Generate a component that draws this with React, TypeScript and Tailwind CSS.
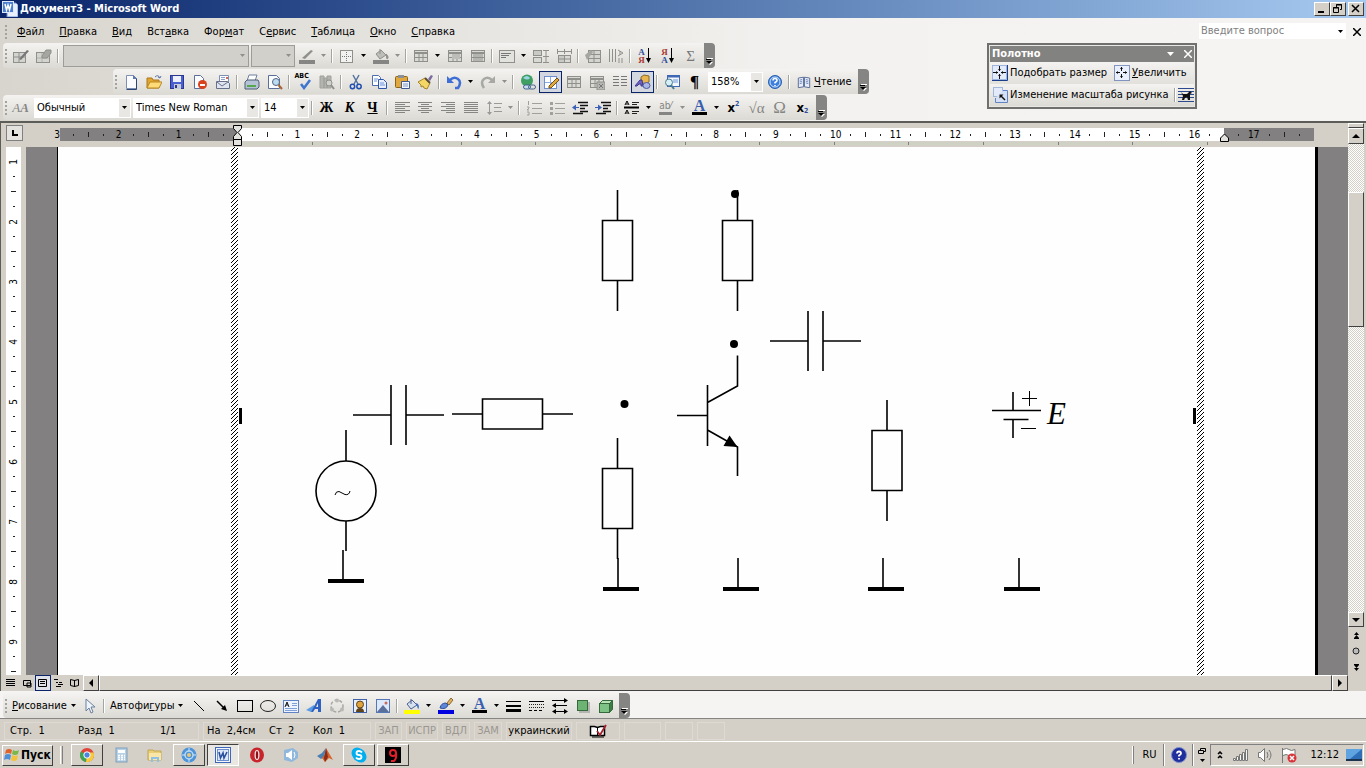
import React from 'react';

const GRAY = '#8f8f8c';
const NAVY = '#1c3f8c';

/* ---------- icons (16x16) ---------- */

const tableGrid = (
  <>
    <rect x="1.5" y="2.5" width="13" height="11" fill="#d9d9d6" stroke={GRAY} />
    <path d="M1 5h14" stroke={GRAY} strokeWidth="2" />
    <path d="M2 9.5h12M6 5v8M10 5v8" stroke={GRAY} />
  </>
);

const bars = (rows: number[], color: string) =>
  rows.map((w, i) => <rect key={i} x="1" y={2 + i * 2} width={w} height="1" fill={color} />);

const icons: Record<string, React.ReactNode> = {
  drawTable: (
    <>
      <rect x="0.5" y="4.5" width="12" height="10" fill="#d3d3cf" stroke={GRAY} />
      <path d="M1 9h11M6 5v9" stroke={GRAY} />
      <path d="M6 11l8-9 2 1-8 9z" fill="#777" />
    </>
  ),
  eraser: (
    <>
      <rect x="0.5" y="4.5" width="13" height="10" fill="#d3d3cf" stroke={GRAY} />
      <path d="M1 10h12M6 5v9" stroke="#b0b0ad" />
      <path d="M6 8l4-6h5v3l-4 5H6z" fill="#a5a5a2" stroke={GRAY} />
    </>
  ),
  penGray: (
    <>
      <path d="M3 10l9-8 2 1-8 8z" fill={GRAY} />
      <rect x="0" y="12" width="16" height="4" fill="#858583" />
    </>
  ),
  borders: (
    <>
      <rect x="1.5" y="2.5" width="12" height="12" fill="#f2f2f0" stroke={GRAY} />
      <path d="M7.5 4v9M3 8.5h9" stroke="#777" strokeDasharray="1 1" />
    </>
  ),
  bucketGray: (
    <>
      <path d="M3 6l5-4 5 5-6 4z" fill="#bdbdba" stroke={GRAY} />
      <path d="M7 6V1M13 6c3 2 2 5 1 5z" stroke={GRAY} fill={GRAY} />
      <rect x="0" y="12" width="16" height="4" fill="#858583" />
    </>
  ),
  table: tableGrid,
  merge: (
    <>
      {tableGrid}
      <rect x="5" y="6" width="8" height="5" fill="#bcbcb9" />
    </>
  ),
  split: (
    <>
      {tableGrid}
      <path d="M4 5v8M8 5v8M12 5v8" stroke={GRAY} />
    </>
  ),
  alignBox: (
    <>
      <rect x="0.5" y="2.5" width="15" height="12" fill="#e2e2df" stroke={GRAY} />
      <path d="M2 5.5h10M2 7.5h8M2 9.5h5" stroke="#777" />
    </>
  ),
  rowsEven: (
    <>
      <rect x="0.5" y="2.5" width="8" height="5" fill="#c9c9c6" stroke={GRAY} />
      <rect x="0.5" y="9.5" width="8" height="5" fill="#d9d9d6" stroke={GRAY} />
      <path d="M10 2.5h6M10 8.5h6M10 14.5h6M13 3v11" stroke={GRAY} />
    </>
  ),
  colsEven: (
    <>
      <path d="M1 3.5h15M1.5 1v5M8.5 1v5M15.5 1v5" stroke={GRAY} />
      <rect x="2.5" y="7.5" width="6" height="7" fill="#c9c9c6" stroke={GRAY} />
      <rect x="8.5" y="7.5" width="6" height="7" fill="#d9d9d6" stroke={GRAY} />
      <path d="M3 11h11" stroke={GRAY} />
    </>
  ),
  autoFormat: (
    <>
      <rect x="3.5" y="2.5" width="12" height="12" fill="#d3d3cf" stroke={GRAY} />
      <path d="M4 6.5h11M4 10.5h11M9 3v11" stroke={GRAY} />
      <path d="M0 7l6-5 2 2-6 8z" fill="#a5a5a2" />
    </>
  ),
  textDir: (
    <>
      <path d="M1.5 1v13M4.5 1v13M7.5 1v13M11 10v5M14 10v5" stroke={GRAY} />
      <path d="M10 2l5 3-5 3M12 3v4" stroke={GRAY} fill="none" />
    </>
  ),
  newDoc: (
    <>
      <path d="M3.5 1.5h7l3 3v10h-10z" fill="#fafcff" stroke="#7d8fb3" />
      <path d="M13.5 4.5v11h-10" fill="none" stroke="#2f4577" />
      <path d="M10 1v4h4z" fill="#5f79ac" />
    </>
  ),
  open: (
    <>
      <path d="M1 4h5l1 2h6v8H1z" fill="#e3a52e" stroke="#a9761c" />
      <path d="M1 14l3-6h12l-3 6z" fill="#ffdb77" stroke="#b98722" />
      <path d="M9 3q3-3 5 1l1-2M14 4l-2-1" fill="none" stroke="#5a74a8" />
    </>
  ),
  save: (
    <>
      <rect x="1.5" y="1.5" width="13" height="13" fill="#4a5fd0" stroke="#2a378f" />
      <rect x="4" y="2" width="8" height="6" fill="#eef1fb" />
      <rect x="5" y="10" width="7" height="5" fill="#c8cdd8" />
      <rect x="6" y="11" width="2" height="3" fill="#2a378f" />
    </>
  ),
  permission: (
    <>
      <path d="M2.5 1.5h6l3 3v10h-9z" fill="#fafcff" stroke="#5b6f9b" />
      <circle cx="10.5" cy="10.5" r="4.5" fill="#d9421f" />
      <rect x="8" y="10" width="5" height="2" fill="#fff" />
    </>
  ),
  mail: (
    <>
      <path d="M4.5 1.5h9v7h-9z" fill="#fff" stroke="#7d8fb3" />
      <path d="M6 3.5h4M6 5.5h4" stroke="#8aa2cc" />
      <path d="M1.5 7.5h11l2 2v5h-13z" fill="#dfe4ee" stroke="#65718c" />
      <path d="M2 8l5 4 6-4" fill="none" stroke="#65718c" />
      <rect x="11" y="3" width="2" height="2" fill="#cc6a5a" />
    </>
  ),
  print: (
    <>
      <path d="M5 1h8l-2 6H3z" fill="#fff" stroke="#6d7f9f" />
      <path d="M1 8l2-2h11l1 2v5l-2 2H1z" fill="#b6c3d6" stroke="#4d5c75" />
      <rect x="3" y="11" width="9" height="2" fill="#58a64e" />
    </>
  ),
  preview: (
    <>
      <path d="M1.5 1.5h8l3 3v10h-11z" fill="#fafcff" stroke="#5b6f9b" />
      <circle cx="9" cy="8" r="3.5" fill="#bcdcf3" stroke="#56657f" />
      <path d="M11.5 11l3.5 4" stroke="#a8653a" strokeWidth="2" />
    </>
  ),
  check: (
    <path d="M5 10l3 4 6-8" fill="none" stroke="#3e76cf" strokeWidth="2.5" />
  ),
  research: (
    <>
      <path d="M1 2h4v12H1zM5 4h3v10H5zM8 2h4v12H8z" fill="#b3b3b0" stroke="#a0a09d" />
      <circle cx="10" cy="9" r="3" fill="#d0d0cd" stroke={GRAY} />
      <path d="M12 11l3 4" stroke={GRAY} strokeWidth="2" />
    </>
  ),
  cut: (
    <>
      <path d="M5 1l5 9M11 1l-5 9" stroke="#56759f" strokeWidth="1.5" />
      <circle cx="4.5" cy="12.5" r="2.2" fill="none" stroke="#1f4fb0" strokeWidth="1.5" />
      <circle cx="11" cy="12.5" r="2.2" fill="none" stroke="#1f4fb0" strokeWidth="1.5" />
    </>
  ),
  copy: (
    <>
      <path d="M1.5 1.5h6l2 2v8h-8z" fill="#fff" stroke="#4f6eb0" />
      <path d="M7.5 5.5h5l3 3v6h-8z" fill="#e8f0ff" stroke="#2f55a8" />
      <path d="M3 5h4M3 7h3M9 9h4M9 11h5" stroke="#6f93d6" />
    </>
  ),
  paste: (
    <>
      <rect x="1.5" y="2.5" width="12" height="11" rx="1" fill="#e0a73c" stroke="#8b6316" />
      <rect x="4" y="1" width="6" height="3" fill="#8b8f98" />
      <path d="M7.5 7.5h8v7h-8z" fill="#f4f8ff" stroke="#405a93" />
      <path d="M9 10h5M9 12h5" stroke="#7d97c8" />
    </>
  ),
  brush: (
    <>
      <path d="M11 5l3-4 2 1-3 5z" fill="#7b6ba0" />
      <path d="M1 8l7-4 5 5-3 6-3-1-1-2-2 1 0-2z" fill="#f5d766" stroke="#a8832a" />
      <path d="M8 4l5 5" stroke="#5a4a32" strokeWidth="2" />
    </>
  ),
  undo: (
    <>
      <path d="M4 6q4-4 8-1t0 9H9" fill="none" stroke="#3f6fd6" strokeWidth="2.5" />
      <path d="M1 2v7h7z" fill="#3f6fd6" />
    </>
  ),
  redo: (
    <>
      <path d="M12 6Q8 2 4 5t0 9" fill="none" stroke="#a8a8a5" strokeWidth="2.5" />
      <path d="M15 2v7H8z" fill="#a8a8a5" />
    </>
  ),
  globe: (
    <>
      <circle cx="7" cy="6.5" r="6" fill="#3f9f63" />
      <path d="M3 4q4-4 7 0-2 3-7 0z" fill="#9bd4e6" />
      <rect x="3.5" y="11" width="7" height="4" rx="2" fill="#c9dcef" stroke="#41618f" />
      <rect x="8.5" y="11" width="7" height="4" rx="2" fill="none" stroke="#41618f" />
    </>
  ),
  tablePen: (
    <>
      <rect x="1.5" y="2.5" width="12" height="12" fill="#fff" stroke="#6f8fd0" />
      <path d="M2 8.5h11M7.5 3v11" stroke="#8faadf" />
      <path d="M6 12l8-8 2 2-8 8H6z" fill="#e2a83a" stroke="#6f4f1a" />
    </>
  ),
  tableX: (
    <>
      {tableGrid}
      <rect x="8" y="8" width="8" height="8" fill="#b5b5b2" stroke={GRAY} />
      <path d="M10 10l4 4M14 10l-4 4" stroke="#777" />
    </>
  ),
  columns: <path d="M1 2.5h6M1 5.5h6M1 8.5h6M1 11.5h6M9 2.5h6M9 5.5h6M9 8.5h6M9 11.5h6" stroke="#777" />,
  drawing: (
    <>
      <path d="M6 3l3-2 5 1v6l-4 2-4-2z" fill="#e8b64c" stroke="#8b6a25" />
      <path d="M0 12l5-6h2l1 6H6v-2H4l-2 2z" fill="#6d63c4" stroke="#3e3790" />
      <ellipse cx="11.5" cy="11.5" rx="3.5" ry="3" fill="#a9b8e8" stroke="#4e5a9b" />
    </>
  ),
  docMap: (
    <>
      <rect x="3.5" y="1.5" width="12" height="11" fill="#f3f8ff" stroke="#3f67b5" />
      <path d="M4 2.5h11" stroke="#3f67b5" strokeWidth="2" />
      <path d="M9 6h5M9 8h5" stroke="#6a93d8" />
      <circle cx="5" cy="8.5" r="3.5" fill="#d7f0f5" stroke="#4b7c93" />
      <path d="M7 11l3 4" stroke="#4b7c93" strokeWidth="2" />
    </>
  ),
  help: (
    <>
      <circle cx="8" cy="8" r="6.5" fill="#3d7fdc" stroke="#2a5fb0" />
      <circle cx="8" cy="8" r="5" fill="none" stroke="#cfe2fa" />
      <path d="M6 6.5q0-2 2-2t2 2q0 1-2 2v1M8 11v1" fill="none" stroke="#fff" strokeWidth="1.5" />
    </>
  ),
  book: (
    <>
      <path d="M1.5 3.5l6-1v11l-6 1zM8.5 2.5l6 1v11l-6-1z" fill="#e8eef9" stroke="#4a608f" />
      <path d="M3 6l3-1M3 8l3-1M3 10l3-1M10 5l3 1M10 7l3 1M10 9l3 1" stroke="#6a82b5" />
    </>
  ),
  left: bars([15, 10, 15, 10, 15, 10], '#858583'),
  center: (
    <path d="M1 2.5h14M4 4.5h8M1 6.5h14M4 8.5h8M1 10.5h14M4 12.5h8" stroke="#858583" />
  ),
  right: <path d="M1 2.5h14M6 4.5h9M1 6.5h14M6 8.5h9M1 10.5h14M6 12.5h9" stroke="#858583" />,
  justify: bars([14, 14, 14, 14, 14, 14], '#858583'),
  spacing: (
    <>
      <path d="M3.5 2v12M8 3.5h8M8 7.5h7M8 11.5h8" stroke="#999" />
      <path d="M1 4l2.5-3L6 4zM1 12l2.5 3L6 12z" fill="#999" />
    </>
  ),
  numbered: (
    <>
      <path d="M6 3.5h10M6 8.5h10M6 13.5h10" stroke="#a0a09d" />
      <path d="M2.5 1v4M1 7h2v1l-2 2h2M1 12h2v3H1" fill="none" stroke="#a0a09d" />
    </>
  ),
  bulleted: (
    <>
      <path d="M6 3.5h10M6 8.5h10M6 13.5h10" stroke="#a0a09d" />
      <path d="M1 2h3v3H1zM1 7h3v3H1zM1 12h3v3H1z" fill="#a0a09d" />
    </>
  ),
  outdent: (
    <>
      <path d="M6 2.5h10M8 5.5h8M8 8.5h5M8 11.5h8M1 13.5h10" stroke="#111" strokeWidth="1.5" />
      <path d="M0 7.5l4-3v6z" fill="#3c62b8" />
      <path d="M3 7.5h4" stroke="#3c62b8" />
    </>
  ),
  indent: (
    <>
      <path d="M6 2.5h10M8 5.5h8M8 8.5h5M8 11.5h8M1 13.5h10" stroke="#111" strokeWidth="1.5" />
      <path d="M7 7.5l-4-3v6z" fill="#3c62b8" />
      <path d="M0 7.5h4" stroke="#3c62b8" />
    </>
  ),
  lineStyle: (
    <>
      <path d="M0 7.5h15" stroke="#000" strokeWidth="2" />
      <path d="M8 2.5h7M8 4.5h5M8 11.5h7M8 13.5h5" stroke="#222" />
      <path d="M1 5l2-4 2 4M2 4h2M1 14l2-4 2 4M2 13h2" fill="none" stroke="#000" />
    </>
  ),
  cursor: <path d="M4 1v12l3-3 2 5 2-1-2-5h4z" fill="#eef4fb" stroke="#6b7f9c" />,
  line: <path d="M3 3l10 10" stroke="#000" />,
  arrow: (
    <>
      <path d="M3 3l7 7" stroke="#000" strokeWidth="1.5" />
      <path d="M13 13l-6-2 4-4z" fill="#000" />
    </>
  ),
  rect: <rect x="0.5" y="2.5" width="15" height="11" fill="none" stroke="#000" />,
  oval: <ellipse cx="8" cy="8" rx="7.5" ry="5.5" fill="none" stroke="#222" />,
  textBox: (
    <>
      <rect x="0.5" y="2.5" width="15" height="12" fill="#eef4ff" stroke="#5f83c4" />
      <path d="M2 9l2-5 2 5M3 7h2" fill="none" stroke="#111" />
      <path d="M9 5.5h5M9 7.5h5M2 10.5h12M2 12.5h12" stroke="#7f9fd8" />
    </>
  ),
  wordArt: (
    <>
      <path d="M0 12l8-5 0 4-3 3z" fill="#5c9de8" />
      <path d="M5 14L12 1h3v13h-3v-3H9l-2 3zM10 9h2V5z" fill="#2f62c0" fillRule="evenodd" />
    </>
  ),
  diagram: (
    <>
      <circle cx="8" cy="8" r="6" fill="none" stroke="#a5a5a2" strokeWidth="1.5" strokeDasharray="3 2" />
      <circle cx="8" cy="2.5" r="2" fill="#b8b8b5" />
      <circle cx="3" cy="11.5" r="2" fill="#b8b8b5" />
      <circle cx="13" cy="11.5" r="2" fill="#b8b8b5" />
    </>
  ),
  clipArt: (
    <>
      <rect x="1.5" y="1.5" width="13" height="13" fill="#e9effb" stroke="#3f62a8" />
      <circle cx="8" cy="6.5" r="3.5" fill="#e0a33c" stroke="#5f431a" />
      <path d="M4 14q0-4 4-4t4 4z" fill="#5f431a" />
    </>
  ),
  picture: (
    <>
      <rect x="1.5" y="1.5" width="13" height="13" fill="#dde9fb" stroke="#5577b5" />
      <path d="M2 14l6-7 6 7z" fill="#5b6f9b" />
      <circle cx="11" cy="5" r="1.5" fill="#c96a54" />
    </>
  ),
  bucket: (
    <>
      <path d="M3 6l5-4 5 5-6 4z" fill="#d7e0ef" stroke="#4a608f" />
      <path d="M7 6V1" stroke="#4a608f" />
      <path d="M12 5c4 1 3 6 2 6z" fill="#3d6fc4" />
      <rect x="0" y="12" width="16" height="4" fill="#ffff00" />
    </>
  ),
  pen: (
    <>
      <path d="M2 10q1-5 6-5l2 2q-2 5-8 3z" fill="#5f86d6" stroke="#2f4fa0" />
      <path d="M9 5l4-5 2 2-4 5z" fill="#e0b060" stroke="#8b6a35" />
      <rect x="0" y="12" width="16" height="4" fill="#0000e0" />
    </>
  ),
  weight: (
    <>
      <path d="M0 3.5h15" stroke="#000" />
      <path d="M0 8h15" stroke="#000" strokeWidth="2" />
      <path d="M0 12.5h15" stroke="#000" strokeWidth="3" />
    </>
  ),
  dashes: (
    <>
      <path d="M0 3.5h15" stroke="#000" />
      <path d="M0 6.5h15M0 9.5h15" stroke="#222" strokeDasharray="1 1" />
      <path d="M0 12.5h15" stroke="#000" strokeDasharray="3 2" />
    </>
  ),
  arrows: (
    <>
      <path d="M0 2.5h13M2 7.5h13M2 13.5h11" stroke="#000" />
      <path d="M12 0l4 2.5L12 5zM4 5L0 7.5 4 10zM4 11l-4 2.5 4 2.5zM12 11l4 2.5-4 2.5z" fill="#000" />
    </>
  ),
  shadow: (
    <>
      <rect x="4" y="4" width="11" height="11" fill="#b4b4b0" />
      <rect x="2.5" y="2.5" width="10" height="10" fill="#6db374" stroke="#356b3b" />
    </>
  ),
  cube: (
    <>
      <path d="M1.5 5.5l3-3h10v9l-3 3z" fill="#3f7d46" stroke="#356b3b" />
      <path d="M1.5 5.5l3-3h10l-3 3z" fill="#b9e2b9" stroke="#356b3b" />
      <rect x="1.5" y="5.5" width="10" height="9" fill="#7fc285" stroke="#356b3b" />
    </>
  ),
  fit: (
    <>
      <rect x="0.5" y="0.5" width="14" height="14" fill="#e3ebfa" stroke="#9db4de" />
      <path d="M15.5 0v15.5H0" fill="none" stroke={NAVY} />
      <path d="M7.5 1v5M7.5 9v5M1 7.5h5M9 7.5h5" stroke="#111" />
      <path d="M6 4h3L7.5 6zM6 11h3L7.5 9zM4 6v3l2-1.5zM11 6v3L9 7.5z" fill="#111" />
    </>
  ),
  expand: (
    <>
      <rect x="0.5" y="0.5" width="15" height="15" fill="#eaf0fb" stroke={NAVY} strokeDasharray="1 1" />
      <path d="M7.5 2v4M7.5 9v4M2 7.5h4M9 7.5h4" stroke="#111" />
      <path d="M6 4h3L7.5 2zM6 11h3l-1.5 2zM4 6v3L2 7.5zM11 6v3l2-1.5z" fill="#111" />
    </>
  ),
  scale: (
    <>
      <path d="M1.5 0.5h9v9h-9z" fill="#e3ebfa" stroke="#5f83c4" strokeDasharray="1 1" />
      <path d="M11 3.5h4.5v12h-12V11" fill="#d5e0f5" stroke="#5f83c4" />
      <path d="M13 13l-4-4" stroke="#111" strokeWidth="1.5" />
      <path d="M7.5 7.5h4l-4 4z" fill="#111" />
    </>
  ),
  dog: (
    <>
      <path d="M0 1.5h16M0 4.5h16M0 7.5h16M0 10.5h16M0 14.5h16" stroke="#2d4a8f" />
      <path d="M3 5l2 2h4l3-3 2 2-2 1v6h-2l-1-3-2 1-1 2H4l1-4z" fill="#111" />
    </>
  ),
};

function Icon({ name, size = 'w-4 h-4' }: { name: string; size?: string }) {
  return (
    <svg viewBox="0 0 16 16" className={`${size} shrink-0`} fill="none" aria-hidden="true">
      {icons[name]}
    </svg>
  );
}

/* ---------- toolbar pieces ---------- */

function Tri({ dim }: { dim?: boolean }) {
  return (
    <svg viewBox="0 0 5 3" className="h-[3px] w-[5px] shrink-0" aria-hidden="true">
      <path d="M0 0h5L2.5 3z" fill={dim ? '#8f8f8c' : '#000'} />
    </svg>
  );
}

function Btn({ icon, label, active, children }: { icon?: string; label: string; active?: boolean; children?: React.ReactNode }) {
  return (
    <button
      type="button"
      aria-label={label}
      className={`flex h-[22px] w-[23px] shrink-0 items-center justify-center ${active ? 'border border-[#0a246a] bg-[#d3d7e0]' : ''}`}
    >
      {icon ? <Icon name={icon} /> : children}
    </button>
  );
}

function Drop({ label, dim }: { label: string; dim?: boolean }) {
  return (
    <button type="button" aria-label={label} className="flex h-[22px] w-[11px] shrink-0 items-center justify-center">
      <Tri dim={dim} />
    </button>
  );
}

const Sep = () => (
  <div className="flex w-[6px] shrink-0 justify-center">
    <div className="h-[14px] w-[2px] border-r border-white bg-[#a5a5a0]" />
  </div>
);

const Grip = () => (
  <div className="flex w-[6px] shrink-0 flex-col items-center gap-[2px]">
    {[0, 1, 2, 3].map((i) => (
      <span key={i} className="h-[2px] w-[2px] bg-[#a3a39d]" />
    ))}
  </div>
);

const Cap = () => (
  <button
    type="button"
    aria-label="Параметры панелей инструментов"
    className="ml-[2px] flex w-[11px] shrink-0 flex-col items-center justify-end self-stretch rounded-r bg-[#858583] pb-[3px]"
  >
    <svg viewBox="0 0 7 7" className="h-[7px] w-[7px]" aria-hidden="true">
      <path d="M1 0h6v1H1zM1 4h6L4 7z" fill="#fff" />
      <path d="M0 1h5v1H0zM0 3h6L3 6z" fill="#000" />
    </svg>
  </button>
);

function Bar({ className = '', children }: { className?: string; children: React.ReactNode }) {
  return (
    <div className={`flex h-[25px] w-max items-center rounded bg-linear-to-b from-[#f4f3f1] to-[#dcdad4] ${className}`}>
      {children}
    </div>
  );
}

function Combo({ label, value, width, disabled }: { label: string; value: string; width: string; disabled?: boolean }) {
  return (
    <div
      className={`relative ml-[2px] flex shrink-0 items-center border ${width} ${
        disabled ? 'h-[22px] border-[#9c9c98] bg-[#d2d0ca]' : 'h-[20px] border-white bg-white'
      }`}
    >
      <select
        aria-label={label}
        disabled={disabled}
        className="h-full w-full appearance-none bg-transparent pl-[2px] text-[11px] leading-4 opacity-100 outline-none"
      >
        <option>{value}</option>
      </select>
      <span
        className={`pointer-events-none absolute inset-y-0 right-0 flex w-[11px] items-center justify-center ${
          disabled ? '' : 'bg-[#e9e7e3]'
        }`}
      >
        <Tri dim={disabled} />
      </span>
    </div>
  );
}

const Glyph = ({ className, children }: { className: string; children: React.ReactNode }) => (
  <span className={`font-['Liberation_Serif',serif] leading-4 ${className}`}>{children}</span>
);

function SortIcon({ top, bottom, swap }: { top: string; bottom: string; swap?: boolean }) {
  return (
    <span className="flex items-center font-['Liberation_Serif',serif] text-[9px] font-bold leading-[8px]">
      <span className="flex flex-col">
        <span className={swap ? 'text-[#a83a32]' : 'text-[#2f4f9b]'}>{top}</span>
        <span className={swap ? 'text-[#2f4f9b]' : 'text-[#a83a32]'}>{bottom}</span>
      </span>
      <svg viewBox="0 0 5 15" className="ml-px h-[15px] w-[5px]" aria-hidden="true">
        <path d="M2 0h1v11H2zM0 10h5l-2.5 5z" fill="#000" />
      </svg>
    </span>
  );
}

/* ---------- window top ---------- */

const raised = 'border border-t-white border-l-white border-r-[#404040] border-b-[#404040] bg-[#d4d0c8]';

function TitleBar() {
  return (
    <header className="flex h-[18px] items-center bg-linear-to-r from-[#0a246a] to-[#a6caf0] pl-[2px] pr-[2px]">
      <svg viewBox="0 0 16 16" className="h-4 w-4" aria-hidden="true">
        <path d="M5 2h9l2 2v12H5z" fill="#e9effb" stroke="#6f8fd0" />
        <rect x="0.5" y="0.5" width="11" height="11" fill="#4d7fd0" stroke="#dce8fb" />
        <path d="M3 3l1.5 6L6 4l1.5 5L9 3" fill="none" stroke="#fff" strokeWidth="1.5" />
      </svg>
      <h1 className="ml-[2px] flex-1 text-[11px] font-bold leading-4 text-white">Документ3 - Microsoft Word</h1>
      <div className="flex">
        <button type="button" aria-label="Свернуть" className={`h-[14px] w-4 ${raised}`}>
          <svg viewBox="0 0 14 12" className="h-3 w-[14px]"><path d="M3 8h6v2H3z" fill="#000" /></svg>
        </button>
        <button type="button" aria-label="Восстановить" className={`h-[14px] w-4 ${raised}`}>
          <svg viewBox="0 0 14 12" className="h-3 w-[14px]" fill="none" stroke="#000">
            <path d="M5.5 4V1.5h5v5H9M5 2h6M2.5 4.5h5v5h-5zM2 5h6" />
          </svg>
        </button>
        <button type="button" aria-label="Закрыть" className={`ml-[2px] h-[14px] w-4 ${raised}`}>
          <svg viewBox="0 0 14 12" className="h-3 w-[14px]"><path d="M3 2l7 7M10 2l-7 7" stroke="#000" strokeWidth="1.5" /></svg>
        </button>
      </div>
    </header>
  );
}

const menu = [
  ['', 'Ф', 'айл'],
  ['', 'П', 'равка'],
  ['', 'В', 'ид'],
  ['Вст', 'а', 'вка'],
  ['Фор', 'м', 'ат'],
  ['С', 'е', 'рвис'],
  ['', 'Т', 'аблица'],
  ['', 'О', 'кно'],
  ['', 'С', 'правка'],
];

function MenuBar() {
  return (
    <nav className="flex h-[25px] items-center gap-px pl-[3px] pt-[2px]">
      <Grip />
      {menu.map(([a, key, b]) => (
        <button key={a + key + b} type="button" className="px-[7px] leading-4">
          {a}
          <u>{key}</u>
          {b}
        </button>
      ))}
      <div className="ml-auto mt-[3px] flex h-4 w-[147px] items-center self-start bg-white">
        <input
          aria-label="Введите вопрос"
          placeholder="Введите вопрос"
          className="h-4 min-w-0 flex-1 pl-[2px] text-[11px] outline-none placeholder:text-[#808080]"
        />
        <Drop label="Список вопросов" />
      </div>
      <button type="button" aria-label="Закрыть документ" className="flex w-[19px] justify-center">
        <svg viewBox="0 0 8 8" className="h-2 w-2"><path d="M0 0l8 8M8 0L0 8" stroke="#000" strokeWidth="1.5" /></svg>
      </button>
    </nav>
  );
}

function TableBar() {
  return (
    <Bar className="ml-[3px]">
      <Grip />
      <Btn icon="drawTable" label="Нарисовать таблицу" />
      <Btn icon="eraser" label="Ластик" />
      <Sep />
      <Combo label="Тип линии" value="" width="w-[186px]" disabled />
      <Combo label="Толщина линии" value="" width="w-[44px]" disabled />
      <Btn icon="penGray" label="Цвет границы" />
      <Drop label="Цвета границы" dim />
      <Sep />
      <Btn icon="borders" label="Границы" />
      <Drop label="Виды границ" />
      <Btn icon="bucketGray" label="Цвет заливки" />
      <Drop label="Цвета заливки" dim />
      <Sep />
      <Btn icon="table" label="Добавить таблицу" />
      <Drop label="Вставка таблицы" />
      <Btn icon="merge" label="Объединить ячейки" />
      <Btn icon="split" label="Разбить ячейки" />
      <Sep />
      <Btn icon="alignBox" label="Выравнивание ячеек" />
      <Drop label="Виды выравнивания" />
      <Btn icon="rowsEven" label="Выровнять высоту строк" />
      <Btn icon="colsEven" label="Выровнять ширину столбцов" />
      <Sep />
      <Btn icon="autoFormat" label="Автоформат таблицы" />
      <Btn icon="textDir" label="Направление текста" />
      <Sep />
      <Btn label="Сортировка по возрастанию"><SortIcon top="А" bottom="Я" /></Btn>
      <Btn label="Сортировка по убыванию"><SortIcon top="Я" bottom="А" swap /></Btn>
      <Btn label="Автосумма"><Glyph className="text-[15px] text-[#777]">Σ</Glyph></Btn>
      <Cap />
    </Bar>
  );
}

function StandardBar() {
  return (
    <Bar className="ml-[113px]">
      <Grip />
      <Btn icon="newDoc" label="Создать" />
      <Btn icon="open" label="Открыть" />
      <Btn icon="save" label="Сохранить" />
      <Btn icon="permission" label="Разрешения" />
      <Btn icon="mail" label="Сообщение" />
      <Sep />
      <Btn icon="print" label="Печать" />
      <Btn icon="preview" label="Предварительный просмотр" />
      <Sep />
      <Btn label="Правописание">
        <span className="relative flex">
          <Icon name="check" />
          <span className="absolute -left-[1px] -top-[1px] text-[7px] font-bold leading-[7px]">ABC</span>
        </span>
      </Btn>
      <Btn icon="research" label="Справочные материалы" />
      <Sep />
      <Btn icon="cut" label="Вырезать" />
      <Btn icon="copy" label="Копировать" />
      <Btn icon="paste" label="Вставить" />
      <Btn icon="brush" label="Формат по образцу" />
      <Sep />
      <Btn icon="undo" label="Отменить" />
      <Drop label="Список отмен" />
      <Btn icon="redo" label="Вернуть" />
      <Drop label="Список возвратов" dim />
      <Sep />
      <Btn icon="globe" label="Гиперссылка" />
      <Btn icon="tablePen" label="Таблицы и границы" active />
      <Btn icon="table" label="Таблица" />
      <Btn icon="tableX" label="Лист Excel" />
      <Btn icon="columns" label="Колонки" />
      <Btn icon="drawing" label="Панель рисования" active />
      <Sep />
      <Btn icon="docMap" label="Схема документа" />
      <Btn label="Непечатаемые знаки"><Glyph className="text-[17px] font-bold">¶</Glyph></Btn>
      <Combo label="Масштаб" value="158%" width="w-[55px]" />
      <Btn icon="help" label="Справка Word" />
      <Sep />
      <button type="button" className="flex w-16 items-center gap-[3px] pl-[5px] leading-4">
        <Icon name="book" size="w-[14px] h-[14px]" />
        <span><u>Ч</u>тение</span>
      </button>
      <Cap />
    </Bar>
  );
}

function FormatBar() {
  return (
    <Bar className="ml-[3px]">
      <Grip />
      <Btn label="Стили и форматирование">
        <Glyph className="text-[13px] italic text-[#858583]">A<b>A</b></Glyph>
      </Btn>
      <Combo label="Стиль" value="Обычный" width="w-[97px]" />
      <Combo label="Шрифт" value="Times New Roman" width="w-[126px]" />
      <Combo label="Размер" value="14" width="w-[48px]" />
      <Sep />
      <Btn label="Полужирный"><Glyph className="text-[14px] font-bold">Ж</Glyph></Btn>
      <Btn label="Курсив"><Glyph className="text-[14px] font-bold italic">К</Glyph></Btn>
      <Btn label="Подчеркнутый"><Glyph className="text-[14px] font-bold underline">Ч</Glyph></Btn>
      <Sep />
      <Btn icon="left" label="По левому краю" />
      <Btn icon="center" label="По центру" />
      <Btn icon="right" label="По правому краю" />
      <Btn icon="justify" label="По ширине" />
      <Btn icon="spacing" label="Междустрочный интервал" />
      <Drop label="Интервалы" dim />
      <Sep />
      <Btn icon="numbered" label="Нумерация" />
      <Btn icon="bulleted" label="Маркеры" />
      <Btn icon="outdent" label="Уменьшить отступ" />
      <Btn icon="indent" label="Увеличить отступ" />
      <Sep />
      <Btn icon="lineStyle" label="Внешние границы" />
      <Drop label="Границы абзаца" />
      <Btn label="Выделение цветом">
        <span className="flex flex-col border-b-[3px] border-[#858583] text-[10px] leading-[12px] text-[#858583]">ab⁄</span>
      </Btn>
      <Drop label="Цвета выделения" dim />
      <Btn label="Цвет шрифта">
        <Glyph className="border-b-[3px] border-black px-[2px] text-[16px] font-bold leading-[12px] text-[#3a5fb0]">A</Glyph>
      </Btn>
      <Drop label="Цвета шрифта" />
      <Btn label="Надстрочный"><span className="flex text-[13px] font-bold leading-4">x<span className="text-[7px] leading-[9px] text-[#2f4f9b]">2</span></span></Btn>
      <Btn label="Редактор формул"><Glyph className="text-[15px] text-[#858583]">√α</Glyph></Btn>
      <Btn label="Символ"><Glyph className="text-[17px] text-[#858583]">Ω</Glyph></Btn>
      <Btn label="Подстрочный"><span className="flex items-end text-[13px] font-bold leading-4">x<span className="text-[7px] leading-[9px] text-[#2f4f9b]">2</span></span></Btn>
      <Cap />
    </Bar>
  );
}

function CanvasPanel() {
  return (
    <section className="absolute right-[169px] top-[43px] w-[210px] border-2 border-[#6f6f6d] bg-[#e9e7e3] p-px">
      <div className="flex h-4 items-center bg-[#828280] pl-[2px] pr-[2px] text-white">
        <h2 className="flex-1 text-[11px] font-bold leading-4">Полотно</h2>
        <button type="button" aria-label="Параметры" className="px-[10px]">
          <svg viewBox="0 0 7 4" className="h-1 w-[7px]"><path d="M0 0h7L3.5 4z" fill="#fff" /></svg>
        </button>
        <button type="button" aria-label="Закрыть панель">
          <svg viewBox="0 0 8 8" className="h-2 w-2"><path d="M0 0l8 8M8 0L0 8" stroke="#fff" strokeWidth="1.5" /></svg>
        </button>
      </div>
      <div className="flex h-[22px] items-center bg-linear-to-b from-[#f4f3f1] to-[#e2e0db] pl-[2px]">
        <button type="button" className="flex w-[122px] items-center gap-[2px] leading-4">
          <Icon name="fit" />
          Подобрать размер
        </button>
        <button type="button" className="flex items-center gap-[2px] leading-4">
          <Icon name="expand" />
          <span><u>У</u>величить</span>
        </button>
      </div>
      <div className="flex h-[22px] items-center bg-linear-to-b from-[#f4f3f1] to-[#dcdad4] pl-[2px]">
        <button type="button" className="flex flex-1 items-center gap-[2px] whitespace-nowrap leading-4">
          <Icon name="scale" />
          Изменение масштаба рисунка
        </button>
        <Sep />
        <button type="button" aria-label="Обтекание текстом">
          <Icon name="dog" />
        </button>
      </div>
    </section>
  );
}

/* ---------- rulers ---------- */

/* quarter-centimetre marks: number, dot, half tick, dot */
function marks(from: number, count: number, label: (cm: number) => number) {
  return Array.from({ length: count }, (_, i) => {
    const q = from + i;
    if (q % 4 === 0) return String(label(q / 4));
    return q % 2 === 0 ? 'tick' : 'dot';
  });
}

function Marks({ items, vertical }: { items: string[]; vertical?: boolean }) {
  return (
    <>
      {items.map((m, i) => (
        <span
          key={i}
          className={`flex items-center justify-center leading-3 ${vertical ? 'h-[15px] w-full shrink-0' : 'h-full w-0 flex-1'}`}
        >
          {m === 'tick' && <i className={vertical ? 'h-px w-[5px] bg-[#222]' : 'h-[5px] w-px bg-[#222]'} />}
          {m === 'dot' && <i className={vertical ? 'h-px w-[2px] bg-[#222]' : 'h-[2px] w-px bg-[#222]'} />}
          {m !== 'tick' && m !== 'dot' && <span className={`text-[10px] ${vertical ? '-rotate-90' : ''}`}>{m}</span>}
        </span>
      ))}
    </>
  );
}

function HorizontalRuler() {
  return (
    <div className="relative flex h-6 shrink-0 items-start bg-[#d4d0c8] pr-[34px]">
      <button
        type="button"
        aria-label="Позиция табуляции"
        className="ml-[5px] mt-[2px] flex h-4 w-[17px] shrink-0 items-center justify-center border border-[#808080] bg-[#e4e2de]"
      >
        <svg viewBox="0 0 6 6" className="h-[6px] w-[6px]"><path d="M0 0h2v4h4v2H0z" fill="#000" /></svg>
      </button>
      <div className="min-w-0 flex-1">
        <div className="mt-[5px] flex h-[13px]">
          <span className="w-[37px] shrink-0 pt-px text-right text-[10px] leading-3">3</span>
          <div className="flex w-[178px] shrink-0 bg-[#828080] pl-[6px] pr-[7px]">
            <Marks items={marks(-11, 11, (cm) => -cm)} />
          </div>
          <div className="flex min-w-0 flex-1 bg-white px-[7px]">
            <Marks items={marks(1, 65, (cm) => cm)} />
          </div>
          <div className="flex w-[90px] shrink-0 bg-[#828080] px-[7px]">
            <Marks items={marks(67, 5, (cm) => cm)} />
          </div>
        </div>
        <div className="ml-[215px] mr-[106px] mt-px flex h-[3px]">
          {Array.from({ length: 13 }, (_, i) => (
            <span key={i} className="flex-1 border-r border-[#808080] bg-[#d0d1c5]" />
          ))}
        </div>
      </div>
      <svg viewBox="0 0 9 23" className="absolute left-[232px] top-[1px] h-[23px] w-[9px]" aria-hidden="true">
        <path d="M0.5 1.5h8v3l-3.5 4 3.5 4v3h-8v-3l3.5-4-3.5-4zM0.5 15.5h8v6h-8z" fill="#e4e2de" stroke="#000" />
      </svg>
      <svg viewBox="0 0 9 9" className="absolute right-[119px] top-[10px] h-[9px] w-[9px]" aria-hidden="true">
        <path d="M0.5 8.5v-3.5l4-4 4 4v3.5z" fill="#e4e2de" stroke="#000" />
      </svg>
    </div>
  );
}

/* ---------- schematic ---------- */

const Resistor = ({ x, y, horizontal }: { x: number; y: number; horizontal?: boolean }) => (
  <g transform={`translate(${x} ${y})${horizontal ? ' rotate(-90)' : ''}`}>
    <path d="M0 0v30M0 91v30M-15 30.5h30v60h-30z" />
  </g>
);

const Capacitor = ({ x, y }: { x: number; y: number }) => (
  <path d={`M${x} ${y}h38m15 0h38M${x + 38} ${y - 30}v60m15 0v-60`} />
);

const Ground = ({ x, y }: { x: number; y: number }) => (
  <>
    <path d={`M${x} ${y}v29`} />
    <path d={`M${x - 15} ${y + 31}h36`} strokeWidth="4" />
  </>
);

function Schematic() {
  return (
    <svg width="959" height="528" viewBox="0 0 959 528" className="shrink-0 overflow-visible" role="img" aria-label="Схема усилителя">
      <g fill="none" stroke="#000" strokeWidth="1.6">
        <Resistor x={379.5} y={43} />
        <Resistor x={499.5} y={43} />
        <Resistor x={379.5} y={291} />
        <Resistor x={649} y={253} />
        <Resistor x={214} y={267} horizontal />
        <Capacitor x={115} y={268} />
        <Capacitor x={532} y={194} />

        <circle cx="108" cy="344" r="30" />
        <path d="M108 283v31M108 374v30" />

        <Ground x={105} y={403} />
        <Ground x={380} y={411} />
        <Ground x={500} y={411} />
        <Ground x={645} y={411} />
        <Ground x={781} y={411} />

        <path d="M439 268.5h30M469.5 238v61M469.5 255.5l30-16.5v-30.5M469.5 283l30 17v29" />
        <path d="M491.5 288.5l-6 10.5 14 1z" fill="#000" stroke="none" />

        <path d="M775 245v18M754 263.5h49M765.5 272.5h25M775 272v19" />
        <path d="M2.5 261v16M956.5 261v16" strokeWidth="3" />
      </g>
      <circle cx="497" cy="47" r="4" />
      <circle cx="496" cy="197" r="4" />
      <circle cx="386.5" cy="257" r="4" />
      {/* thin signs: generator wave and battery polarity */}
      <path d="M97 348q1-4 4-3.500l6 3q4 1 5-3.500" fill="none" stroke="#000" />
      <path d="M784 251.5h15M791.5 244v15M783 281.5h15" stroke="#000" />
      <text x="809" y="277" fontSize="31" fontStyle="italic" className="font-['Liberation_Serif',serif]">E</text>
    </svg>
  );
}

function Hatch({ id }: { id: string }) {
  return (
    <svg className="h-full w-[7px] shrink-0" aria-hidden="true">
      <pattern id={id} width="4" height="4" patternUnits="userSpaceOnUse">
        <path d="M3 0h1v1H3zM2 1h1v1H2zM1 2h1v1H1zM0 3h1v1H0z" fill="#000" />
      </pattern>
      <rect width="100%" height="100%" fill={`url(#${id})`} shapeRendering="crispEdges" />
    </svg>
  );
}

function DocumentArea() {
  return (
    <div className="flex h-[528px] overflow-hidden bg-[#d4d0c8]">
      <div className="ml-[5px] mr-[5px] flex w-[15px] shrink-0 flex-col overflow-hidden bg-white pt-[7px]">
        <Marks items={marks(4, 35, (cm) => cm)} vertical />
      </div>
      <main className="flex min-w-0 flex-1 bg-[#828080] pl-[31px] pr-[30px]">
        <div className="flex min-w-0 flex-1 justify-between border-l border-r-[3px] border-black bg-[#fefefe] pl-[173px] pr-[111px]">
          <Hatch id="hatch-left" />
          <Schematic />
          <Hatch id="hatch-right" />
        </div>
      </main>
    </div>
  );
}

/* ---------- scroll bars ---------- */

const dither = 'bg-[repeating-conic-gradient(#fff_0_25%,#d4d0c8_0_50%)] bg-[length:2px_2px]';

function Arrow({ dir }: { dir: 'up' | 'down' | 'left' | 'right' }) {
  const d = { up: 'M0 6h8L4 2z', down: 'M0 2h8L4 6z', left: 'M6 0v8L2 4z', right: 'M2 0v8l4-4z' }[dir];
  return (
    <svg viewBox="0 0 8 8" className="h-2 w-2" aria-hidden="true">
      <path d={d} fill="#000" />
    </svg>
  );
}

function VerticalScroll() {
  return (
    <div className="flex w-[18px] shrink-0 flex-col border-r-2 border-[#d4d0c8] bg-[#d4d0c8]">
      <div className={`h-[5px] ${raised}`} />
      <button type="button" aria-label="Вверх" className={`flex h-4 items-center justify-center ${raised}`}><Arrow dir="up" /></button>
      <div className={`flex-1 pt-12 ${dither}`}>
        <div className={`h-[135px] ${raised}`} />
      </div>
      <button type="button" aria-label="Вниз" className={`flex h-[15px] items-center justify-center ${raised}`}><Arrow dir="down" /></button>
      <div className="flex h-[64px] flex-col items-center justify-start text-black">
        <button type="button" aria-label="Предыдущая страница" className="flex h-4 items-center">
          <svg viewBox="0 0 5 7" className="h-[7px] w-[5px]"><path d="M0 3h5L2.5 0zM0 6h5L2.5 3zM0 6h5v1H0z" /></svg>
        </button>
        <button type="button" aria-label="Выбор объекта перехода" className="flex h-4 items-center">
          <svg viewBox="0 0 8 8" className="h-2 w-2"><circle cx="4" cy="4" r="3" fill="#bbb" stroke="#222" /></svg>
        </button>
        <button type="button" aria-label="Следующая страница" className="flex h-4 items-center">
          <svg viewBox="0 0 5 7" className="h-[7px] w-[5px]"><path d="M0 0h5v1H0zM0 1h5L2.5 4zM0 4h5L2.5 7z" /></svg>
        </button>
      </div>
    </div>
  );
}

const views = [
  { label: 'Обычный режим', d: 'M0 1.5h9M0 3.5h9M0 5.5h9M0 7.5h9' },
  { label: 'Веб-документ', d: 'M1.5 2.5h7v5h-7zM5 5h4v4H5z' },
  { label: 'Разметка страницы', d: 'M0.5 1.5h8v7h-8zM2 3.5h5M2 5.5h5' },
  { label: 'Структура', d: 'M0 1.5h4M2 4.5h2M5 4.5h3M4 6.5h5M2 8.5h5' },
  { label: 'Режим чтения', d: 'M0.5 1.5l4 1 4-1v6l-4 1-4-1zM4.5 2v7' },
];

function HorizontalScroll() {
  return (
    <div className="flex h-4 items-center bg-[#d4d0c8] pl-[2px]">
      {views.map((v, i) => (
        <button
          key={v.label}
          type="button"
          aria-label={v.label}
          className={`flex h-4 w-4 shrink-0 items-center justify-center ${i === 2 ? 'border border-[#0a246a] bg-[#dfe2ea]' : ''}`}
        >
          <svg viewBox="0 0 10 10" className="h-[10px] w-[10px]" fill="none" stroke="#000"><path d={v.d} /></svg>
        </button>
      ))}
      <button type="button" aria-label="Влево" className={`flex h-4 w-4 items-center justify-center ${raised}`}><Arrow dir="left" /></button>
      <div className={`h-4 flex-1 ${raised}`} />
      <button type="button" aria-label="Вправо" className={`flex h-4 w-4 items-center justify-center ${raised}`}><Arrow dir="right" /></button>
    </div>
  );
}

/* ---------- window bottom ---------- */

function DrawingBar() {
  return (
    <div className="h-7 border-b border-[#858583] bg-[#f5f4f2] pt-[2px]">
      <Bar className="ml-[3px]">
        <Grip />
        <button type="button" className="flex w-[69px] items-center gap-1 pl-[3px] leading-4">
          <span><u>Р</u>исование</span>
          <Tri />
        </button>
        <Btn icon="cursor" label="Выбор объектов" />
        <Sep />
        <button type="button" className="flex w-[80px] items-center gap-1 pl-[3px] leading-4">
          <span>Автофи<u>г</u>уры</span>
          <Tri />
        </button>
        <Btn icon="line" label="Линия" />
        <Btn icon="arrow" label="Стрелка" />
        <Btn icon="rect" label="Прямоугольник" />
        <Btn icon="oval" label="Овал" />
        <Btn icon="textBox" label="Надпись" />
        <Btn icon="wordArt" label="Объект WordArt" />
        <Btn icon="diagram" label="Диаграмма" />
        <Btn icon="clipArt" label="Картинка" />
        <Btn icon="picture" label="Рисунок" />
        <Sep />
        <Btn icon="bucket" label="Цвет заливки" />
        <Drop label="Цвета заливки" />
        <Btn icon="pen" label="Цвет линий" />
        <Drop label="Цвета линий" />
        <Btn label="Цвет шрифта">
          <Glyph className="border-b-[3px] border-black px-[2px] text-[16px] font-bold leading-[12px] text-[#3a5fb0]">A</Glyph>
        </Btn>
        <Drop label="Цвета шрифта" />
        <Btn icon="weight" label="Тип линии" />
        <Btn icon="dashes" label="Тип штриха" />
        <Btn icon="arrows" label="Вид стрелки" />
        <Btn icon="shadow" label="Тень" />
        <Btn icon="cube" label="Объем" />
        <Cap />
      </Bar>
    </div>
  );
}

const statusBox = 'flex h-[18px] items-center border border-[#dedad3]';

function StatusBar() {
  return (
    <div className="flex h-[23px] items-center gap-1 border-b border-white bg-[#d5d0c7] pl-1 pt-px leading-4">
      <div className={`w-[195px] pl-[5px] ${statusBox}`}>
        <span className="w-[68px]">Стр.&nbsp; 1</span>
        <span className="w-[82px]">Разд&nbsp; 1</span>
        <span>1/1</span>
      </div>
      <div className={`w-[168px] pl-[3px] ${statusBox}`}>
        <span className="w-[62px]">На&nbsp; 2,4см</span>
        <span className="w-[44px]">Ст&nbsp; 2</span>
        <span>Кол&nbsp; 1</span>
      </div>
      <div className={`w-[27px] justify-center text-[#9a9792] ${statusBox}`}>ЗАП</div>
      <div className={`w-[32px] justify-center text-[#9a9792] ${statusBox}`}>ИСПР</div>
      <div className={`w-[28px] justify-center text-[#9a9792] ${statusBox}`}>ВДЛ</div>
      <div className={`w-[28px] justify-center text-[#9a9792] ${statusBox}`}>ЗАМ</div>
      <div className={`w-[66px] justify-center ${statusBox}`}>украинский</div>
      <div className={`w-[44px] justify-center ${statusBox}`}>
        <svg viewBox="0 0 18 14" className="h-[14px] w-[18px]" aria-hidden="true">
          <path d="M1.5 2.5h4l3 1 3-1h4v9h-14z" fill="#fff" stroke="#000" strokeWidth="1.5" />
          <path d="M8.5 3v9M3 13h12" stroke="#000" />
          <path d="M8 7l3 4 6-10" fill="none" stroke="#a3202a" strokeWidth="1.8" />
        </svg>
      </div>
      <div className={`w-[37px] ${statusBox}`} />
      <div className={`w-[28px] ${statusBox}`} />
      <div className={`w-[28px] ${statusBox}`} />
    </div>
  );
}

const apps = [
  {
    label: 'Google Chrome',
    state: 'raised',
    icon: (
      <>
        <circle cx="8" cy="8" r="7" fill="#e0453a" />
        <path d="M8 8L2 4.5A7 7 0 0 0 7 15z" fill="#3aa655" />
        <path d="M8 8l-1 7a7 7 0 0 0 7.5-9.5H8z" fill="#f6cb3c" />
        <circle cx="8" cy="8" r="3.2" fill="#4a86e0" stroke="#fff" />
      </>
    ),
  },
  {
    label: 'Калькулятор',
    state: '',
    icon: (
      <>
        <rect x="3" y="1" width="11" height="14" fill="#b6d0e6" stroke="#7f9db8" />
        <rect x="5" y="3" width="7" height="3" fill="#fff" />
        <path d="M5 8.5h7M5 10.5h7M5 12.5h7" stroke="#fff" strokeDasharray="2 1" strokeWidth="1.5" />
      </>
    ),
  },
  {
    label: 'Проводник',
    state: '',
    icon: (
      <>
        <path d="M1 3h5l1 1h7v9H1z" fill="#e9cf78" stroke="#c4a550" />
        <path d="M2 6h12v7H2z" fill="#f8e7a8" />
        <path d="M4 10h8v5h-2v-3H6v3H4z" fill="#8fc1e6" />
      </>
    ),
  },
  {
    label: 'Навигатор',
    state: 'raised',
    icon: (
      <>
        <circle cx="8" cy="8" r="7.5" fill="#4d93d8" />
        <circle cx="8" cy="8" r="4" fill="none" stroke="#b9daf5" strokeWidth="1.5" />
        <circle cx="8" cy="8" r="2" fill="#e9c977" />
        <path d="M8 1v3M8 12v3M1 8h3M12 8h3" stroke="#cfe6fa" />
      </>
    ),
  },
  {
    label: 'Microsoft Word',
    state: 'pressed',
    icon: (
      <>
        <rect x="0.5" y="0.5" width="15" height="15" fill="#f3f7fd" stroke="#3f67b5" />
        <rect x="2.5" y="2.5" width="11" height="11" fill="#dce8f8" stroke="#6a8fd0" />
        <path d="M4 5l1.5 6L8 6l1 5 3-6" fill="none" stroke="#2a4f9f" strokeWidth="1.6" />
      </>
    ),
  },
  {
    label: 'Opera',
    state: '',
    icon: (
      <>
        <ellipse cx="8" cy="8" rx="7" ry="7.5" fill="#c8242c" />
        <ellipse cx="8" cy="8" rx="2.5" ry="5" fill="#f2e4e4" />
        <ellipse cx="8" cy="8" rx="1.2" ry="4" fill="#8a1018" />
      </>
    ),
  },
  {
    label: 'Звук',
    state: '',
    icon: (
      <>
        <path d="M1 3l9-2 5 4v6l-6 4-8-2z" fill="#8fb8dc" />
        <path d="M3 6h2l4-3v10l-4-3H3z" fill="#fff" />
        <path d="M11 5q2 3 0 6" stroke="#fff" fill="none" />
      </>
    ),
  },
  {
    label: 'MATLAB',
    state: '',
    icon: (
      <>
        <path d="M0 9l5-3 4-5-2 9-3 2z" fill="#4a7fb0" />
        <path d="M9 1l7 12-4-2-4 4-3-4 3-4z" fill="#d4632a" />
        <path d="M9 1l2 9-3 5-1-4z" fill="#8a2a18" />
      </>
    ),
  },
  {
    label: 'Skype',
    state: 'raised',
    icon: (
      <>
        <circle cx="6" cy="6" r="5.5" fill="#00aff0" />
        <circle cx="10" cy="10" r="5.5" fill="#00aff0" />
        <circle cx="8" cy="8" r="6.5" fill="#00aff0" />
        <path d="M11 5.5Q9.5 4 8 4 5.5 4 5.5 6T8 8t2.5 2Q10.5 12 8 12 6 12 5 10.5" fill="none" stroke="#fff" strokeWidth="1.8" />
      </>
    ),
  },
  {
    label: 'Девятка',
    state: 'raised',
    icon: (
      <>
        <rect width="16" height="16" fill="#000" />
        <circle cx="8" cy="6" r="3" fill="none" stroke="#e0202a" strokeWidth="2" />
        <path d="M11 6q1 5-2 8H6" fill="none" stroke="#e0202a" strokeWidth="2" />
      </>
    ),
  },
];

function TaskBar() {
  return (
    <footer className="flex h-[26px] items-center bg-[#d4d0c8] pl-[2px] pr-[2px]">
      <button type="button" className={`flex h-[21px] w-[51px] items-center gap-px pl-px text-[12px] font-bold leading-4 ${raised}`}>
        <svg viewBox="0 0 16 16" className="h-4 w-4 shrink-0" aria-hidden="true">
          <path d="M2 3q3-2 6 0L7 7Q4 5 1 7z" fill="#e0622c" />
          <path d="M9 3q3 2 6 0l-1 4q-3 2-6 0z" fill="#7ab648" />
          <path d="M1 8q3-2 6 0l-1 5Q3 11 0 13z" fill="#4d8fd8" />
          <path d="M8 8q3 2 6 0l-1 5q-3 2-6 0z" fill="#f2c23c" />
        </svg>
        Пуск
      </button>
      <div className="ml-[7px] mr-2 h-[18px] w-[3px] border-l border-white border-r border-r-[#808080]" />
      {apps.map((a) => (
        <button
          key={a.label}
          type="button"
          aria-label={a.label}
          className={`mr-[2px] flex h-[22px] w-8 shrink-0 items-center justify-center ${
            a.state === 'raised' ? raised : ''
          } ${a.state === 'pressed' ? 'border border-[#404040] border-r-white border-b-white bg-[#e9e7e2]' : ''}`}
        >
          <svg viewBox="0 0 16 16" className="h-4 w-4" fill="none" aria-hidden="true">{a.icon}</svg>
        </button>
      ))}
      <div className="ml-auto flex h-[22px] items-center">
        <span className="h-[18px] w-[2px] border-r border-[#808080] bg-white" />
        <span className="w-[29px] pl-[2px] text-center leading-4">RU</span>
        <span className="h-full w-[2px] border-r border-white bg-[#808080]" />
        <button type="button" aria-label="Справка" className="flex w-[27px] justify-center">
          <svg viewBox="0 0 16 16" className="h-4 w-4" fill="none">
            <circle cx="8" cy="8" r="7.5" fill="#1f2f9b" stroke="#7d8fd0" />
            <path d="M6 6.5q0-2 2-2t2 2q0 1-2 2v1M8 11v1.5" stroke="#fff" strokeWidth="1.8" />
          </svg>
        </button>
        <span className="h-full w-[2px] border-r border-white bg-[#808080]" />
        <button type="button" aria-label="Языковая панель" className="flex w-4 flex-col items-center gap-1">
          <svg viewBox="0 0 8 7" className="h-[7px] w-2" fill="none" stroke="#000"><path d="M2.5 2.5v-2h5v3h-2M0.5 2.5h5v3h-5z" /></svg>
          <Tri />
        </button>
        <div className="flex h-full w-[154px] items-center border border-[#808080] border-r-white border-b-white">
          <button type="button" aria-label="Скрытые значки" className="flex w-[18px] justify-center">
            <svg viewBox="0 0 6 8" className="h-2 w-[6px]" fill="none" stroke="#000"><path d="M1 3l2-2 2 2M1 7l2-2 2 2" strokeWidth="1.5" /></svg>
          </button>
          <svg viewBox="0 0 16 14" className="ml-1 h-[14px] w-4" fill="#f4f4f2" stroke="#777" aria-hidden="true">
            <path d="M0.5 10.5h2v2h-2zM3.5 8.5h2v4h-2zM6.5 6.5h2v6h-2zM9.5 4.5h2v8h-2zM12.5 1.5h2v11h-2z" />
          </svg>
          <svg viewBox="0 0 16 16" className="ml-2 h-4 w-4" fill="none" stroke="#777" aria-hidden="true">
            <path d="M1.5 5.5h2l4-4v13l-4-4h-2z" fill="#fff" />
            <path d="M10 5q2 3 0 6M12 3q4 5 0 10" />
          </svg>
          <svg viewBox="0 0 18 16" className="ml-[7px] h-4 w-[18px]" fill="none" aria-hidden="true">
            <path d="M2.5 1v15M3 2.5q4-2 6 0t6 0v6q-3 2-6 0T3 8.5" fill="#fff" stroke="#777" />
            <circle cx="12" cy="11" r="4.5" fill="#d8353a" />
            <path d="M10 9l4 4M14 9l-4 4" stroke="#fff" strokeWidth="1.5" />
          </svg>
          <time className="ml-auto leading-4">12:12</time>
          <svg viewBox="0 0 16 12" className="ml-[7px] mr-px h-3 w-4" aria-hidden="true">
            <rect width="16" height="12" fill="#2f6fb8" />
            <path d="M0 0h16L4 10H0z" fill="#5fa4e0" />
            <rect y="10" width="16" height="2" fill="#1c3350" />
          </svg>
        </div>
      </div>
    </footer>
  );
}

export default function App() {
  return (
    <div className="relative flex min-h-screen flex-col overflow-hidden bg-[#d4d0c8] font-['DejaVu_Sans_Condensed','DejaVu_Sans',sans-serif] text-[11px] text-black">
      <TitleBar />
      <div className="flex flex-col bg-linear-to-r from-[#d8d5ce] via-[#f3f2f0] via-60% to-[#f5f4f2] pb-px">
        <MenuBar />
        <div className="flex flex-col gap-px">
          <TableBar />
          <StandardBar />
          <FormatBar />
        </div>
      </div>
      <CanvasPanel />
      <div className="flex border-l border-t-2 border-[#5c5c58]">
        <div className="min-w-0 flex-1">
          <HorizontalRuler />
          <DocumentArea />
          <HorizontalScroll />
        </div>
        <VerticalScroll />
      </div>
      <DrawingBar />
      <StatusBar />
      <TaskBar />
    </div>
  );
}
